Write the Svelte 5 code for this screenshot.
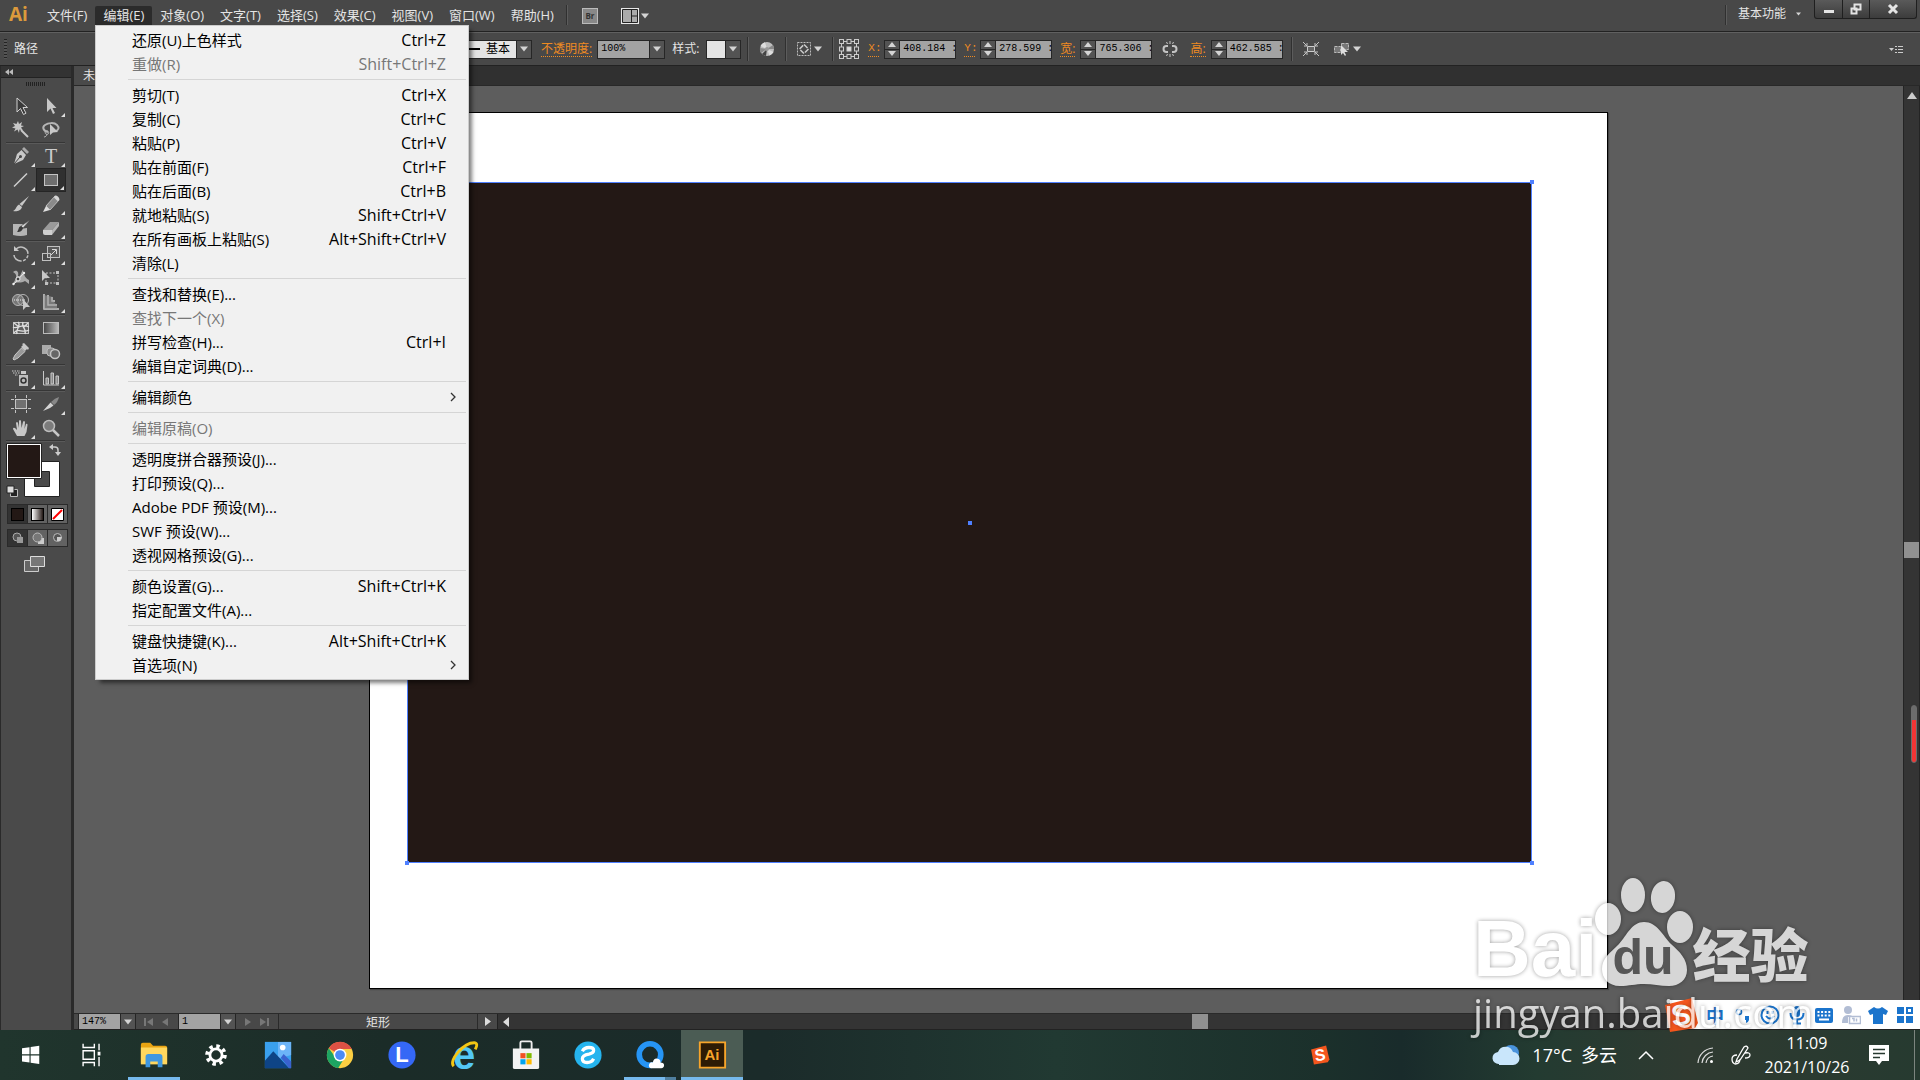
<script lang="ts">
    type Item = { label: string; keys?: string; off?: boolean; sub?: boolean };

    const menus = ["文件(F)", "编辑(E)", "对象(O)", "文字(T)", "选择(S)", "效果(C)", "视图(V)", "窗口(W)", "帮助(H)"];

    let openMenu = $state("编辑(E)");
    let activeTool = $state("rect");

    const editMenu: Item[][] = [
        [
            { label: "还原(U)上色样式", keys: "Ctrl+Z" },
            { label: "重做(R)", keys: "Shift+Ctrl+Z", off: true },
        ],
        [
            { label: "剪切(T)", keys: "Ctrl+X" },
            { label: "复制(C)", keys: "Ctrl+C" },
            { label: "粘贴(P)", keys: "Ctrl+V" },
            { label: "贴在前面(F)", keys: "Ctrl+F" },
            { label: "贴在后面(B)", keys: "Ctrl+B" },
            { label: "就地粘贴(S)", keys: "Shift+Ctrl+V" },
            { label: "在所有画板上粘贴(S)", keys: "Alt+Shift+Ctrl+V" },
            { label: "清除(L)" },
        ],
        [
            { label: "查找和替换(E)..." },
            { label: "查找下一个(X)", off: true },
            { label: "拼写检查(H)...", keys: "Ctrl+I" },
            { label: "编辑自定词典(D)..." },
        ],
        [{ label: "编辑颜色", sub: true }],
        [{ label: "编辑原稿(O)", off: true }],
        [
            { label: "透明度拼合器预设(J)..." },
            { label: "打印预设(Q)..." },
            { label: "Adobe PDF 预设(M)..." },
            { label: "SWF 预设(W)..." },
            { label: "透视网格预设(G)..." },
        ],
        [
            { label: "颜色设置(G)...", keys: "Shift+Ctrl+K" },
            { label: "指定配置文件(A)..." },
        ],
        [
            { label: "键盘快捷键(K)...", keys: "Alt+Shift+Ctrl+K" },
            { label: "首选项(N)", sub: true },
        ],
    ];

    // each group is closed by a divider, "+" marks a tool with a flyout
    const toolGroups = [
        ["select", "direct+", "wand", "lasso"],
        ["pen+", "type+", "line+", "rect+", "brush", "pencil+", "blob", "eraser+"],
        ["rotate+", "scale+", "width+", "transform", "shape+", "perspective+"],
        ["mesh", "gradient", "dropper+", "blend"],
        ["spray+", "graph+"],
        ["artboard", "slice+", "hand+", "zoom"],
    ];

    const icons: Record<string, string> = {
        select: '<path d="M6 2v14l3.5-3.5 3 6 2.5-1.300-3-5.700h4.500z" fill="#3a3a3a" stroke="#d0d0d0"/>',
        direct: '<path d="M6 2v14l3.500-3.500 2.500 5.500 2-1-2.500-5h4z" fill="#c8c8c8"/>',
        wand: '<path d="M7 1l1 3 3-2-1 3.500 3 .5-3 1.500 2 3-3.500-1L8 13 6.500 9.500 3 11.500l1.500-3L1 7.500l3-1.500-2-3 3.500 1z" fill="#c8c8c8"/><path d="M10 10l7 7" stroke="#c8c8c8" stroke-width="2"/>',
        lasso: '<path d="M7 12C2 11 1 7 4 5s9-3 12 0 1 5-1 6" fill="none" stroke="#b5b5b5" stroke-width="2"/><path d="M5 11c-2 2 0 4 2 3s0-4-2-3M6 14c0 2-2 3-3 3" fill="none" stroke="#b5b5b5"/><path d="M9 4v11l3-2.500 5-.5z" fill="#c8c8c8"/>',
        pen: '<path d="M13 1l5 5-2 2-5-5z" fill="#aaa"/><path d="M10.500 4l4.500 5-3 5-9 4 3-10z" fill="#c8c8c8"/><path d="M3 18l6-7" stroke="#444"/><circle cx="9.500" cy="10.500" r="1.500" fill="#444"/>',
        type: '',
        line: '<path d="M3 16.500L16 3.500" stroke="#d0d0d0" stroke-width="1.500"/>',
        rect: '<rect x="3.500" y="4.500" width="13" height="11" fill="#6f6f6f" stroke="#c4c4c4"/>',
        brush: '<path d="M18 2l-7 10-2.500-2z" fill="#c8c8c8"/><path d="M8 10.500l3 2.500c-1 4-6 5-9 4 3-1 3-5 6-6.500z" fill="#c8c8c8"/>',
        pencil: '<path d="M14 2l4 4-9 10-4-4z" fill="#8a8a8a" stroke="#bbb"/><path d="M14 1.500q4 0 4.500 4.500l-2 1-3.500-3.500z" fill="#d6d6d6"/><path d="M5 12l4 4-7 2z" fill="#ddd"/>',
        blob: '<path d="M2 6h10l-3 5 7-1v7q-6 2-14 0z" fill="#b5b5b5"/><path d="M19 2l-7 8-2-2z" fill="#d8d8d8" stroke="#444" stroke-width=".5"/><path d="M10 8l2 2c-1 4-4 4-6 4 2-2 1-5 4-6z" fill="#3a3a3a"/>',
        eraser: '<path d="M9 4h9l-7 8H2z" fill="#9a9a9a"/><path d="M2 12h9v5H4q-2 0-2-2z" fill="#d0d0d0"/><path d="M18 4v4l-7 9v-5z" fill="#b5b5b5"/>',
        rotate: '<path d="M5 5c5-4 12-1 12 5 0 4-3 7-7 7s-7-3-7-6" fill="none" stroke="#c0c0c0" stroke-width="1.500" stroke-dasharray="16 1.500 3 1.500 3 1.500"/><path d="M3 2v5h5z" fill="#c8c8c8"/>',
        scale: '<rect x="6.500" y="2.500" width="12" height="11" fill="#5a5a5a" stroke="#c0c0c0"/><rect x="1.500" y="9.500" width="8" height="7" fill="none" stroke="#c0c0c0"/><path d="M10 11l5-5M11 5.500h4.500V10" fill="none" stroke="#d8d8d8"/>',
        width: '<path d="M2 4c4-3 6 0 5 4 3 1 3-4 5-6 1 5 2 8 6 10v4l-4-3c-4 3-8 0-12 3l3-6c1-3-1-5-3-6z" fill="#aaa"/><path d="M2 17L13 5" stroke="#eee"/><circle cx="7" cy="11" r="2" fill="#444" stroke="#eee"/><circle cx="2.500" cy="16" r="1.200" fill="#eee"/><circle cx="13" cy="5" r="1.200" fill="#eee"/>',
        transform: '<rect x="5" y="5" width="12" height="10" fill="none" stroke="#c0c0c0" stroke-dasharray="2 1.500"/><path d="M15 3h3v3h-3zM15 14h3v3h-3zM4 14h3v3H4z" fill="#c0c0c0"/><path d="M1 2v11l3-3h5z" fill="#c8c8c8"/>',
        shape: '<circle cx="7" cy="8" r="5.500" fill="#777" stroke="#b5b5b5"/><circle cx="12" cy="8" r="5.500" fill="none" stroke="#b5b5b5"/><path d="M3 8h12" stroke="#eee" stroke-dasharray="1 1"/><path d="M12 7v11l3-3h4z" fill="#c8c8c8"/>',
        perspective: '<path d="M3 2v15h15M7 3v10h9M11 5v4h3" fill="none" stroke="#d0d0d0" stroke-width="1.500"/><path d="M3 3l9 2v4l4 4v4H3z" fill="#999" opacity=".6"/>',
        mesh: '<rect x="2.500" y="4.500" width="15" height="11" fill="#5f5f5f" stroke="#c4c4c4"/><path d="M2 9c4 3 8-4 16 0M3 15c3-6 9 1 15-3M7 4c4 4-3 7-1 12M12 4c-2 5 4 7 2 12M3 5l5 4M17 5l-5 5" fill="none" stroke="#ddd" stroke-width="1.300"/>',
        gradient: '<defs><linearGradient id="g"><stop stop-color="#444"/><stop offset="1" stop-color="#bbb"/></linearGradient></defs><rect x="2.500" y="4.500" width="15" height="11" fill="url(#g)" stroke="#bbb"/>',
        dropper: '<path d="M12 3l-1-1 2-1 5 5-1 2-1-1-2 2-4-4z" fill="#c8c8c8"/><path d="M10.500 6l3.500 3.500L7 16l-4 2-1-1 2-4z" fill="#999" stroke="#c8c8c8"/>',
        blend: '<rect x="1" y="3" width="9" height="9" fill="#aaa"/><rect x="6" y="6" width="8" height="8" rx="3" fill="#888" stroke="#bbb"/><circle cx="14" cy="12" r="4.500" fill="#666" stroke="#c4c4c4" stroke-width="1.500"/>',
        spray: '<rect x="8" y="7" width="9" height="11" fill="#bdbdbd"/><rect x="10" y="3" width="5" height="3" fill="#c8c8c8"/><circle cx="12.500" cy="12.500" r="2.500" fill="#bbb" stroke="#333" stroke-width="1.500"/><path d="M1 3h8M2 5h7M4 7h3" stroke="#ccc" stroke-dasharray="1.500 1"/>',
        graph: '<path d="M2.500 3v14H18" fill="none" stroke="#c8c8c8"/><path d="M5 10h2.500v6H5zM10 5h2.500v11H10zM15 8h2.500v8H15z" fill="#888" stroke="#c8c8c8"/>',
        artboard: '<rect x="4.500" y="5.500" width="11" height="9" fill="#707070" stroke="#c4c4c4"/><path d="M4.500 1v3M15.500 1v3M4.500 16v3M15.500 16v3M0 5.500h3M17 5.500h3M0 14.500h3M17 14.500h3" stroke="#c4c4c4"/>',
        slice: '<path d="M18 3q-1 5-5 8l-3-3q4-4 8-5z" fill="#888"/><path d="M9.500 8.500l3 3L9 14l-7 3z" fill="#d4d4d4"/>',
        hand: '<path d="M6 18l-4-7q0-2 2-1l2 2-1-7q1-2 2 0l1 5V3q1-2 2 0l.5 7L12 4q1-2 2 0l-.5 7 1.500-5q1.500-1 1.500 1l-1 7-2 4z" fill="#c8c8c8"/>',
        zoom: '<circle cx="8" cy="8" r="5.500" fill="#7c7c7c" stroke="#bdbdbd" stroke-width="1.500"/><path d="M12 12l6 6" stroke="#c8c8c8" stroke-width="2.500"/>',
    };

    const measures = [
        { id: "x", label: "X:", value: "408.184 :" },
        { id: "y", label: "Y:", value: "278.599 :" },
        { id: "w", label: "宽:", value: "765.306 :" },
        { id: "h", label: "高:", value: "462.585 :" },
    ];

    const apps = [
        { name: "start", svg: '<path d="M4 7l10-1.500V15H4zM15.500 5.200L27 3.500V15H15.500zM4 16.500h10V26L4 24.500zM15.500 16.500H27V28l-11.500-1.700z" fill="#fff"/>' },
        { name: "tasks", svg: '<path d="M6.500 4v4h12V4M6.500 28v-4h12v4M6.500 11.500h12v9h-12zM23.500 4v7M23.500 18v10" fill="none" stroke="#fff" stroke-width="1.500"/><path d="M22 12.500h3v4h-3z" fill="#fff"/>' },
        { name: "explorer", on: true, svg: '<path d="M2 5q0-2 2-2h8l3 3h13q2 0 2 2v17H2z" fill="#e9a412"/><path d="M2 8h28v18H2z" fill="#ffd75e"/><path d="M7 29V18q0-3 3-3h12q3 0 3 3v11h-5v-6h-8v6z" fill="#3f97e0"/>' },
        { name: "settings", svg: '<g fill="none" stroke="#fff"><circle cx="16" cy="16" r="6.500" stroke-width="3"/><circle cx="16" cy="16" r="9.500" stroke-width="4" stroke-dasharray="3.700 3.760"/></g>' },
        { name: "photos", svg: '<path d="M2 2h28v28H2z" fill="#3aa0ee"/><path d="M16 2h14v14L16 20z" fill="#6cb4f8"/><path d="M2 22l9-10 17 18H2z" fill="#0e4486"/><path d="M19 19l3-4 8 8v7h-2z" fill="#3a62cf"/><circle cx="21" cy="8" r="3" fill="#fff"/>' },
        { name: "chrome", svg: '<circle cx="16" cy="16" r="14" fill="#fbcf42"/><path d="M16 16L4 8.800A14 14 0 0 1 28.500 9.500H16z" fill="#dd5144"/><path d="M4 8.800A14 14 0 0 0 14 30l6.500-10.500-9-.5z" fill="#1da462"/><circle cx="16" cy="16" r="6.800" fill="#fff"/><circle cx="16" cy="16" r="5.200" fill="#4c8bf5"/>' },
        { name: "launcher", text: "L", svg: '<circle cx="16" cy="16" r="14.500" fill="#3568f6"/>' },
        { name: "ie", text: "e", svg: '<path d="M5 28C-1 22 16 2 28 3c3 1 1 5 0 7" fill="none" stroke="#f4c613" stroke-width="3"/>' },
        { name: "store", svg: '<path d="M10 10V3q0-1.500 1.500-1.500h9Q22 1.500 22 3v7" fill="none" stroke="#eee" stroke-width="2"/><path d="M2 9h28v20q0 2-2 2H4q-2 0-2-2z" fill="#f3f3f3"/><path d="M10 14h5.500v5.500H10z" fill="#f25022"/><path d="M16.500 14H22v5.500h-5.500z" fill="#7fba00"/><path d="M10 20.500h5.500V26H10z" fill="#00a4ef"/><path d="M16.500 20.500H22V26h-5.500z" fill="#ffb900"/>' },
        { name: "edge", svg: '<circle cx="16" cy="16" r="14.500" fill="#25b4ee"/><path d="M10 12q2-4 7-4 5 0 5 3 0 3-5 4-7 1-7 5 0 4 5 4 5 0 7-4" fill="none" stroke="#fff" stroke-width="3.500"/>' },
        { name: "qq", on: true, split: true, svg: '<circle cx="16" cy="15.500" r="11.500" fill="none" stroke="#2695f5" stroke-width="6"/><path d="M17 30q-3-1-2-4 1-3 4-2 1-5 5-4 4 1 3 4 4 0 4 3t-3 3z" fill="#fff"/>' },
        { name: "ai", on: true, focused: true, text: "Ai", svg: '<path d="M3 2.500h27v27H3z" fill="#2d1b05" stroke="#f7a52b" stroke-width="2"/>' },
    ];
</script>

{#snippet caret()}
    <svg class="caret" viewBox="0 0 8 6"><path d="M0 .5h8L4 5.500z" fill="#d4d4d4" /></svg>
{/snippet}

{#snippet sogou(size)}
    <svg width={size} height={size} viewBox="0 0 36 36">
        <path d="M2 8L29 1l6 25-3 5-25 4z" fill="#f4561d" />
        <text x="18" y="28" text-anchor="middle" class="sogou-s" transform="rotate(-8 18 18)">S</text>
    </svg>
{/snippet}

<div class="screen">
    <header class="menubar">
        <span class="brand">Ai</span>
        <nav>
            {#each menus as m}
                <button class:open={openMenu === m} onclick={() => (openMenu = openMenu === m ? "" : m)}>{m}</button>
            {/each}
        </nav>
        <span class="rule"></span>
        <button class="bridge" aria-label="Bridge">Br</button>
        <button class="arrange" aria-label="排列文档">
            <svg width="18" height="16" viewBox="0 0 18 16"><path d="M0 0h18v16H0z" fill="#e8e8e8" /><path d="M1.500 1.500h15v13h-15zM10.500 2v12M11 8h5" fill="#aaa" stroke="#222" /></svg>
            {@render caret()}
        </button>
        <span class="rule far"></span>
        <button class="workspace-name">基本功能 {@render caret()}</button>
        <div class="window-buttons">
            <button aria-label="最小化"><svg width="12" height="12" viewBox="0 0 12 12"><path d="M1 7h10v3H1z" fill="#e4e4e4" /></svg></button>
            <button aria-label="还原"><svg width="12" height="12" viewBox="0 0 12 12"><path d="M4.500 1.500h6v5h-6zM1.500 5.500h5v5h-5z" fill="none" stroke="#e4e4e4" stroke-width="2" /></svg></button>
            <button aria-label="关闭"><svg width="12" height="12" viewBox="0 0 12 12"><path d="M2 2l8 8M10 2l-8 8" stroke="#e4e4e4" stroke-width="3" /></svg></button>
        </div>
    </header>

    <div class="control">
        <span class="grip"></span>
        <span class="kind">路径</span>
        <div class="combo basic">
            <button class="stroke-line"><i></i>基本</button>
            <button class="drop" aria-label="画笔定义">{@render caret()}</button>
        </div>
        <label class="hot opacity-label" for="opacity">不透明度:</label>
        <div class="combo opacity">
            <input id="opacity" value="100%" />
            <button class="drop" aria-label="不透明度列表">{@render caret()}</button>
        </div>
        <span class="style-label">样式:</span>
        <div class="combo swatch">
            <button class="chip" aria-label="图形样式"></button>
            <button class="drop" aria-label="样式列表">{@render caret()}</button>
        </div>
        <span class="rule"></span>
        <button class="tool-icon" aria-label="重新着色">
            <svg width="16" height="16" viewBox="0 0 16 16"><circle cx="8" cy="8" r="7" fill="#bdbdbd" /><path d="M8 8L1.500 5A7 7 0 0 1 6 1.300zM8 8l6.500 3a7 7 0 0 1-4 3.500z" fill="#ddd" /><path d="M8 8l-6 4a7 7 0 0 1-1-5zM8 8l6-4a7 7 0 0 1 1 4z" fill="#888" /><path d="M8 8l-1 7a7 7 0 0 1-4-2z" fill="#444" /><circle cx="8" cy="8" r="2" fill="#999" /></svg>
        </button>
        <span class="rule"></span>
        <button class="tool-icon" aria-label="对齐">
            <svg width="14" height="14" viewBox="0 0 14 14"><path d="M.5.500h13v13H.5z" fill="none" stroke="#bbb" stroke-dasharray="2 1" /><path d="M7 2.500L11.500 7 7 11.500 2.500 7z" fill="none" stroke="#ccc" stroke-width="1.500" stroke-dasharray="5 1.400" /></svg>
            {@render caret()}
        </button>
        <span class="rule"></span>
        <svg class="reference" width="20" height="20" viewBox="0 0 20 20">
            <path d="M2.500 2.500h15v15h-15z" fill="none" stroke="#ccc" />
            {#each [0, 1, 2, 3, 4, 5, 6, 7, 8] as n}
                <rect x={0.5 + (n % 3) * 7.5} y={0.5 + Math.floor(n / 3) * 7.5} width="4" height="4" fill={n === 4 ? "#ddd" : "#484848"} stroke="#ccc" />
            {/each}
        </svg>
        {#each measures as m}
            {#if m.id === "h"}
                <button class="tool-icon link" aria-label="约束宽度和高度比例">
                    <svg width="16" height="16" viewBox="0 0 16 16"><path d="M6 5H4.500a3 3 0 0 0 0 6H6M10 5h1.500a3 3 0 0 1 0 6H10" fill="none" stroke="#c4c4c4" stroke-width="2" /><path d="M8 0v3M4.500 1l1 2M11.500 1l-1 2M8 16v-3M4.500 15l1-2M11.500 15l-1-2" stroke="#c4c4c4" /></svg>
                </button>
            {/if}
            <label class="hot" class:latin={m.id === "x" || m.id === "y"} for={m.id}>{m.label}</label>
            <div class="spin">
                <div class="steps">
                    <button aria-label="增加"><svg width="8" height="5" viewBox="0 0 8 5"><path d="M0 5h8L4 0z" fill="#d4d4d4" /></svg></button>
                    <button aria-label="减少"><svg width="8" height="5" viewBox="0 0 8 5"><path d="M0 0h8L4 5z" fill="#d4d4d4" /></svg></button>
                </div>
                <input id={m.id} value={m.value} />
            </div>
        {/each}
        <span class="rule"></span>
        <button class="tool-icon" aria-label="隔离选中的对象">
            <svg width="16" height="14" viewBox="0 0 16 14"><path d="M4.500 4.500h7v5h-7z" fill="#666" stroke="#ccc" /><path d="M0 0l4 4M4 1v3H1M16 0l-4 4M12 1v3h3M0 14l4-4M1 10h3v3M16 14l-4-4M15 10h-3v3" fill="none" stroke="#c4c4c4" /></svg>
        </button>
        <button class="tool-icon similar" aria-label="选择类似的对象">
            <svg width="17" height="14" viewBox="0 0 17 14"><path d="M1.500 4.500h6v6h-6zM8.500 1.500h7v6h-7z" fill="#777" stroke="#bbb" stroke-dasharray="3 1" /><path d="M8 3v10l2-2 2 3 1-1-1.500-3H15z" fill="#ddd" /></svg>
            {@render caret()}
        </button>
        <button class="tool-icon panel-menu" aria-label="面板菜单">
            <svg width="14" height="9" viewBox="0 0 14 9"><path d="M0 3h5L2.500 6z" fill="#ccc" /><path d="M6 1.500h8M6 4.500h8M6 7.500h8" stroke="#ccc" stroke-dasharray="2 1 5" /></svg>
        </button>
    </div>

    <main>
        <aside>
            <div class="aside-head">
                <svg width="8" height="6" viewBox="0 0 8 6"><path d="M4 0v6L0 3zM8 0v6L4 3z" fill="#bbb" /></svg>
            </div>
            <div class="aside-grip"></div>
            {#each toolGroups as group}
                <div class="tools">
                    {#each group as t}
                        {@const name = t.replace("+", "")}
                        <button class:active={activeTool === name} class:flyout={t.endsWith("+")} aria-label={name} onclick={() => (activeTool = name)}>
                            {#if name === "type"}
                                <span class="type-t">T</span>
                            {:else}
                                <svg width="20" height="20" viewBox="0 0 20 20">{@html icons[name]}</svg>
                            {/if}
                        </button>
                    {/each}
                </div>
            {/each}
            <svg class="fill-stroke" width="56" height="56" viewBox="0 0 56 56">
                <path d="M18.500 18.500h35v35h-35z" fill="#fff" stroke="#222" />
                <path d="M28.500 28.500h15v15h-15z" fill="#4a4a4a" stroke="#222" />
                <path d="M.5.500h35v35H.5z" fill="#fff" stroke="#222" />
                <path d="M2 2h32v32H2z" fill="#231815" />
                <path d="M45 4h4q3 0 3 3v4" fill="none" stroke="#ccc" stroke-width="1.500" />
                <path d="M43 4l4-3v6zM49 9h6l-3 4z" fill="#ccc" />
                <path d="M4.500 46.500h7v7h-7z" fill="#222" stroke="#bbb" />
                <path d="M1 43h7v7H1z" fill="#ddd" stroke="#222" />
            </svg>
            <div class="modes colors">
                <button class="on" aria-label="颜色"><i class="solid"></i></button>
                <button aria-label="渐变"><i class="fade"></i></button>
                <button aria-label="无"><svg width="13" height="13" viewBox="0 0 13 13"><path d="M.5.500h12v12H.5z" fill="#fff" stroke="#000" /><path d="M2 11l9-9" stroke="#f00" stroke-width="2" /></svg></button>
            </div>
            <div class="modes">
                <button class="on" aria-label="正常绘图"><svg width="12" height="12" viewBox="0 0 12 12"><circle cx="5" cy="5" r="4" fill="#555" stroke="#aaa" /><path d="M5 5h6v6H5z" fill="#999" /></svg></button>
                <button aria-label="背面绘图"><svg width="12" height="12" viewBox="0 0 12 12"><path d="M6 6h6v6H6z" fill="#ccc" /><circle cx="5.500" cy="5.500" r="4.500" fill="#777" stroke="#bbb" /></svg></button>
                <button aria-label="内部绘图"><svg width="12" height="12" viewBox="0 0 12 12"><circle cx="5.500" cy="5.500" r="4" fill="#555" stroke="#bbb" /><path d="M5 5h5l-2 4H5z" fill="#ccc" /></svg></button>
            </div>
            <button class="screen-mode" aria-label="更改屏幕模式">
                <svg width="22" height="18" viewBox="0 0 22 18"><path d="M.5 5.500h14v11H.5z" fill="#666" stroke="#ccc" /><path d="M6.500 1.500h14v10h-14z" fill="#777" stroke="#ddd" /></svg>
            </button>
        </aside>

        <section class="document">
            <div class="tabs"><button>未标题-1*</button></div>
            <div class="view">
                <div class="canvas">
                    <div class="artboard">
                        <div class="shape">
                            <i class="tl"></i><i class="tr"></i><i class="bl"></i><i class="br"></i><i class="mid"></i>
                        </div>
                    </div>
                </div>
                <div class="vscroll">
                    <svg width="10" height="7" viewBox="0 0 10 7"><path d="M5 0l5 7H0z" fill="#ccc" /></svg>
                    <div class="thumb"></div>
                    <div class="meter"></div>
                </div>
            </div>
            <div class="status">
                <div class="combo small">
                    <input aria-label="缩放" value="147%" />
                    <button class="drop" aria-label="缩放列表">{@render caret()}</button>
                </div>
                <div class="steps-nav">
                    <svg width="9" height="8" viewBox="0 0 9 8"><path d="M0 0h2v8H0zM9 0v8L3 4z" fill="#777" /></svg>
                    <svg width="6" height="8" viewBox="0 0 6 8"><path d="M6 0v8L0 4z" fill="#777" /></svg>
                </div>
                <div class="combo small">
                    <input aria-label="画板" value="1" />
                    <button class="drop" aria-label="画板列表">{@render caret()}</button>
                </div>
                <div class="steps-nav last">
                    <svg width="6" height="8" viewBox="0 0 6 8"><path d="M0 0v8l6-4z" fill="#777" /></svg>
                    <svg width="9" height="8" viewBox="0 0 9 8"><path d="M7 0h2v8H7zM0 0v8l6-4z" fill="#777" /></svg>
                </div>
                <span class="current">矩形</span>
                <button class="more" aria-label="状态菜单"><svg width="6" height="9" viewBox="0 0 6 9"><path d="M0 0v9l6-4.500z" fill="#ddd" /></svg></button>
                <div class="hscroll">
                    <svg width="6" height="10" viewBox="0 0 6 10"><path d="M6 0v10L0 5z" fill="#ddd" /></svg>
                    <div class="thumb"></div>
                </div>
            </div>
        </section>

        <div class="ime">
            <span class="ime-logo">{@render sogou(36)}</span>
            <span class="zh">中</span>
            <svg viewBox="0 0 20 20"><circle cx="6" cy="7" r="2.500" fill="none" stroke="#1b74cc" stroke-width="1.500" /><path d="M12 11h4v4q-1 3-3 3v-3h-1z" fill="#1b74cc" /></svg>
            <svg viewBox="0 0 20 20"><g fill="none" stroke="#1b74cc" stroke-width="2"><circle cx="10" cy="10" r="8.500" /><path d="M6 11q4 5 8 0M7.500 6v3M12.500 6v3" /></g></svg>
            <svg viewBox="0 0 20 20"><rect x="7" y="1" width="6" height="11" rx="3" fill="#1b74cc" /><path d="M3.500 8q0 6.500 6.500 6.500T16.500 8M10 14v4M6 18.500h8" fill="none" stroke="#1b74cc" stroke-width="2" /></svg>
            <svg viewBox="0 0 20 20"><rect x="1" y="3" width="18" height="15" rx="2" fill="#1b74cc" /><path d="M3.500 7h13M3.500 10.500h13" stroke="#fff" stroke-width="2" stroke-dasharray="2 1.600" /><path d="M5 14.500h10" stroke="#fff" stroke-width="2" /></svg>
            <svg viewBox="0 0 20 20"><g fill="#b2bdd4"><circle cx="7" cy="5" r="4" /><path d="M1 18q0-8 6-8 4 0 5 2H7v6z" /></g><path d="M8.500 11.500h11v7h-11zM11 13.500h2v3M15.500 13.500v3" fill="none" stroke="#b2bdd4" stroke-width="1.500" /></svg>
            <svg viewBox="0 0 20 20"><path d="M6 2q4 3 8 0l6 4-2 4-3-1v10H5V9l-3 1-2-4z" fill="#1b74cc" /></svg>
            <svg viewBox="0 0 20 20"><path d="M2 2h7v7H2zM2 11h7v7H2zM11 11h7v7h-7z" fill="#1b74cc" /><path d="M12 3h5v5h-5z" fill="none" stroke="#1b74cc" stroke-width="2" /></svg>
        </div>
    </main>

    <footer>
        {#each apps as app}
            <button class="app {app.name}" class:on={app.on} class:focused={app.focused} class:split={app.split} aria-label={app.name}>
                <svg width="30" height="30" viewBox="0 0 32 32">{@html app.svg}</svg>
                {#if app.text}<span>{app.text}</span>{/if}
            </button>
        {/each}
        <div class="tray-sogou">{@render sogou(20)}</div>
        <button class="weather">
            <svg width="28" height="22" viewBox="0 0 28 22"><circle cx="19" cy="9" r="8" fill="#4a93dc" /><path d="M7 20a6 6 0 0 1-1-12 8 8 0 0 1 15 0 6.500 6.500 0 0 1 0 13H7z" fill="#c9e6fb" /></svg>
            17°C&ensp;多云
        </button>
        <button class="expand" aria-label="显示隐藏的图标"><svg width="16" height="10" viewBox="0 0 16 10"><path d="M1 9l7-7 7 7" fill="none" stroke="#fff" stroke-width="1.500" /></svg></button>
        <svg class="wifi" width="18" height="18" viewBox="0 0 18 18"><g fill="none" stroke="#ddd" stroke-width="1.200"><path d="M1 17A16 16 0 0 1 16 2M5 17A12 12 0 0 1 16 6M9 17a8 8 0 0 1 7-7" /></g><circle cx="14.500" cy="15.500" r="1.500" fill="#fff" /></svg>
        <svg class="ink" width="20" height="20" viewBox="0 0 20 20"><path d="M6 14l7-12q3-2 4 1l-8 12-4 2zM6 10q-5 0-5 4t3 5q5 0 5-5M14 8q5-1 5 2t-5 3" fill="none" stroke="#fff" stroke-width="1.300" /></svg>
        <div class="clock"><span>11:09</span><span>2021/10/26</span></div>
        <button class="notes" aria-label="通知"><svg width="20" height="20" viewBox="0 0 20 20"><path d="M0 0h20v16h-7l-3 4-3-4H0z" fill="#fff" /><path d="M4 4.500h12M4 8.500h12M4 12.500h7" stroke="#26382f" stroke-width="1.300" /></svg></button>
    </footer>

    {#if openMenu === "编辑(E)"}
        <div class="dropdown" role="menu">
            {#each editMenu as group}
                <div class="group">
                    {#each group as item}
                        <button role="menuitem" disabled={item.off}>
                            <span>{item.label}</span>
                            {#if item.keys}<kbd>{item.keys}</kbd>{/if}
                            {#if item.sub}<svg width="6" height="10" viewBox="0 0 6 10"><path d="M1 1l4 4-4 4" fill="none" stroke="#333" stroke-width="1.300" /></svg>{/if}
                        </button>
                    {/each}
                </div>
            {/each}
        </div>
    {/if}

    <div class="watermark">
        <div class="mark">
            <b>Bai</b>
            <div class="paw">
                <svg width="96" height="110" viewBox="0 0 96 110">
                    <g fill="#fff">
                        <ellipse cx="15" cy="41" rx="13" ry="16" />
                        <ellipse cx="40" cy="17" rx="12" ry="17" />
                        <ellipse cx="70" cy="19" rx="12" ry="16" transform="rotate(8 70 19)" />
                        <ellipse cx="87" cy="49" rx="13" ry="16" />
                        <path d="M51 44c13 0 19 14 27 22 9 8 16 15 16 26 0 10-8 16-18 16-9 0-16-2-25-2s-15 2-24 2c-12 0-18-8-18-17 0-11 8-16 17-25 8-9 13-22 25-22z" />
                    </g>
                </svg>
                <span>du</span>
            </div>
            <b class="zh-mark">经验</b>
        </div>
        <div class="site">jingyan.baidu.com</div>
    </div>
</div>

<style>
    :global(body) {
        margin: 0;
        background: #5d5d5d;
    }

    .screen {
        position: relative;
        display: flex;
        flex-direction: column;
        min-height: 100vh;
        overflow: hidden;
        color: #e4e4e4;
        font: 12px/16px "Open Sans", "Noto Sans CJK SC", sans-serif;
    }
    .screen * {
        box-sizing: border-box;
    }
    button,
    input {
        padding: 0;
        border: 0;
        background: none;
        color: inherit;
        font: inherit;
        border-radius: 0;
        outline: 0;
    }
    svg {
        display: block;
        flex: none;
    }
    .caret {
        width: 8px;
        height: 6px;
    }
    .rule {
        flex: none;
        width: 2px;
        height: 24px;
        background: #303030;
        border-right: 1px solid #5c5c5c;
    }

    .menubar {
        display: flex;
        align-items: flex-start;
        height: 32px;
        background: #484848;
        border-bottom: 1px solid #222;
    }
    .menubar .rule {
        margin-top: 5px;
        height: 20px;
    }
    .brand {
        width: 39px;
        padding-left: 9px;
        color: #dc9a3c;
        font: bold 19px/28px "Open Sans", sans-serif;
    }
    nav {
        display: flex;
        margin-right: 4px;
    }
    nav button {
        height: 19px;
        margin-top: 6px;
        padding: 0 8px;
        border-radius: 2px 2px 0 0;
        font-size: 13px;
        line-height: 19px;
    }
    nav button.open {
        background: #2b2b2b;
    }
    .bridge {
        width: 16px;
        height: 16px;
        margin: 8px 23px 0 14px;
        border: 1px solid #bbb;
        background: #888;
        color: #333;
        font: bold 8px/14px "Open Sans", sans-serif;
    }
    .arrange {
        display: flex;
        align-items: center;
        gap: 2px;
        margin-top: 8px;
    }
    .menubar .rule.far {
        margin-left: auto;
    }
    .workspace-name {
        display: flex;
        align-items: center;
        gap: 10px;
        height: 28px;
        margin: 0 13px 0 11px;
    }
    .workspace-name .caret {
        width: 5px;
        height: 4px;
    }
    .window-buttons {
        display: flex;
        margin-right: 3px;
        border: 1px solid #1f1f1f;
        border-top: 0;
        border-radius: 0 0 3px 3px;
        background: linear-gradient(#5a5a5a, #3c3c3c);
    }
    .window-buttons button {
        display: flex;
        align-items: center;
        justify-content: center;
        width: 27px;
        height: 18px;
    }
    .window-buttons button + button {
        border-left: 1px solid #1f1f1f;
    }
    .window-buttons button:last-child {
        width: 47px;
    }

    .control {
        display: flex;
        align-items: center;
        height: 34px;
        background: #484848;
        border-top: 1px solid #606060;
        border-bottom: 1px solid #222;
    }
    .grip {
        width: 3px;
        height: 20px;
        margin: 0 7px 0 4px;
        background: repeating-linear-gradient(#222 0 1px, #555 1px 3px);
    }
    .kind {
        width: 425px;
    }
    .combo,
    .spin {
        display: flex;
        height: 19px;
        border: 1px solid #262626;
        background: #a3a3a3;
        color: #000;
        font-size: 12px;
    }
    .drop {
        display: flex;
        align-items: center;
        justify-content: center;
        width: 15px;
        border-left: 1px solid #262626;
        background: #535353;
    }
    .combo input,
    .spin input {
        font-family: "Liberation Mono", monospace;
        font-size: 10px;
    }
    .stroke-line {
        display: flex;
        align-items: center;
        gap: 6px;
        width: 76px;
        background: #e4e4e4;
    }
    .stroke-line i {
        width: 40px;
        height: 2px;
        background: #000;
    }
    .hot {
        color: #ef8b22;
        border-bottom: 1px dotted #ef8b22;
        line-height: 15px;
    }
    .hot.latin {
        width: 11px;
        font-family: "Liberation Mono", monospace;
        font-size: 11px;
        white-space: nowrap;
    }
    .opacity-label {
        margin: 0 5px 0 9px;
    }
    .opacity input {
        width: 51px;
        padding-left: 3px;
    }
    .style-label {
        margin: 0 7px;
    }
    .chip {
        width: 18px;
        background: #e4e4e4;
    }
    .swatch {
        margin-right: 6px;
    }
    .tool-icon {
        display: flex;
        align-items: center;
        gap: 3px;
        margin: 0 10px;
    }
    .reference {
        margin: 0 9px 0 5px;
    }
    .spin {
        width: 72px;
        margin: 0 8px 0 5px;
    }
    .steps {
        display: flex;
        flex-direction: column;
        width: 15px;
        background: #535353;
        border-right: 1px solid #262626;
    }
    .steps button {
        display: flex;
        align-items: center;
        justify-content: center;
        flex: 1;
    }
    .steps button + button {
        border-top: 1px solid #262626;
    }
    .spin input {
        width: 55px;
        padding-left: 3px;
    }
    .link {
        margin: 0 12px 0 2px;
    }
    .similar {
        margin-left: 4px;
    }
    .panel-menu {
        margin: 0 17px 0 auto;
    }

    main {
        position: relative;
        display: flex;
        flex: 1;
    }
    aside {
        flex: none;
        width: 74px;
        padding: 0 6px 0 5px;
        background: #4a4a4a;
        border-left: 1px solid #2a2a2a;
        border-right: 3px solid #2a2a2a;
    }
    .aside-head {
        display: flex;
        align-items: center;
        height: 12px;
        margin: 0 -6px 0 -5px;
        padding-left: 4px;
        background: #333;
        border-bottom: 1px solid #222;
    }
    .aside-grip {
        width: 20px;
        height: 4px;
        margin: 4px 0 8px 20px;
        background: repeating-linear-gradient(90deg, #222 0 1px, #4a4a4a 1px 2px);
    }
    .tools {
        display: grid;
        grid-template-columns: 30px 30px;
        grid-auto-rows: 24px;
        border-bottom: 1px solid #363636;
        box-shadow: 0 1px #5a5a5a;
        margin-bottom: 1px;
    }
    .tools button {
        display: flex;
        align-items: center;
        justify-content: center;
        position: relative;
    }
    .tools button.active {
        background: #303030;
        border: 1px solid #252525;
    }
    .tools button.flyout::after {
        content: "";
        position: absolute;
        right: 1px;
        bottom: 1px;
        border: 2px solid;
        border-color: transparent #ddd #ddd transparent;
    }
    .type-t {
        font: 20px/20px "Liberation Serif", serif;
        color: #ccc;
    }
    .fill-stroke {
        margin: 2px 0 5px;
    }
    .modes {
        display: flex;
        width: 61px;
        height: 18px;
        margin: 0 0 6px 1px;
        border: 1px solid #2a2a2a;
        background: #626262;
    }
    .modes.colors {
        height: 20px;
        margin-bottom: 5px;
    }
    .modes button {
        display: flex;
        align-items: center;
        justify-content: center;
        flex: 1;
    }
    .modes button + button {
        border-left: 1px solid #2a2a2a;
    }
    .modes .on {
        background: #333;
    }
    .modes i {
        width: 13px;
        height: 13px;
        border: 1px solid #000;
    }
    .solid {
        background: #231815;
    }
    .fade {
        background: linear-gradient(90deg, #fff, #231815);
    }
    .screen-mode {
        margin: 2px 0 0 18px;
    }

    .document {
        display: flex;
        flex-direction: column;
        flex: 1;
        min-width: 0;
    }
    .tabs {
        height: 20px;
        background: #303030;
        border-bottom: 1px solid #282828;
    }
    .tabs button {
        height: 19px;
        padding: 0 9px;
        background: #4a4a4a;
    }
    .view {
        display: flex;
        flex: 1;
    }
    .canvas {
        position: relative;
        flex: 1;
        background: #5d5d5d;
    }
    .artboard {
        position: absolute;
        left: 295px;
        top: 26px;
        width: 1239px;
        height: 877px;
        border: 1px solid #000;
        background: #fff;
        box-shadow: 1px 1px 1px #444;
    }
    .shape {
        position: absolute;
        left: 37px;
        top: 69px;
        width: 1125px;
        height: 681px;
        border: 1px solid #4f80ff;
        background: #231815;
    }
    .shape i {
        position: absolute;
        width: 4px;
        height: 4px;
        background: #4f80ff;
    }
    .tl { left: -3px; top: -3px; }
    .tr { right: -3px; top: -3px; }
    .bl { left: -3px; bottom: -3px; }
    .br { right: -3px; bottom: -3px; }
    .mid { left: calc(50% - 2px); top: calc(50% - 2px); }

    .vscroll {
        position: relative;
        width: 17px;
        padding: 6px 0 0 3px;
        background: #343434;
        border-left: 1px solid #242424;
        border-right: 1px solid #242424;
    }
    .thumb {
        position: absolute;
        background: #909090;
    }
    .vscroll .thumb {
        left: 0;
        top: calc(50% - 8px);
        width: 15px;
        height: 16px;
    }
    .meter {
        position: absolute;
        right: 2px;
        bottom: 250px;
        width: 6px;
        height: 58px;
        border: 1px solid #6c6c6c;
        border-radius: 3px;
        background: linear-gradient(#6c6c6c 14px, #f23535 14px);
    }
    .status {
        display: flex;
        height: 17px;
        padding-left: 4px;
        background: #484848;
        border-top: 1px solid #2a2a2a;
        border-bottom: 1px solid #222;
    }
    .combo.small {
        height: 15px;
        border-bottom: 0;
        border-top: 0;
    }
    .combo.small input {
        width: 41px;
        padding-left: 3px;
    }
    .steps-nav {
        display: flex;
        align-items: center;
        gap: 9px;
        padding: 0 10px 0 8px;
    }
    .steps-nav.last {
        padding: 0 9px;
        border-right: 1px solid #2a2a2a;
    }
    .current {
        width: 199px;
        text-align: center;
        line-height: 18px;
        border-right: 1px solid #2a2a2a;
    }
    .more {
        width: 19px;
        padding-left: 7px;
    }
    .hscroll {
        position: relative;
        display: flex;
        align-items: center;
        flex: 1;
        padding-left: 5px;
        background: #343434;
        border-left: 1px solid #222;
    }
    .hscroll .thumb {
        left: calc(50% - 17px);
        width: 16px;
        height: 15px;
    }

    .ime {
        position: absolute;
        right: 0;
        bottom: 1px;
        display: flex;
        align-items: center;
        gap: 7px;
        height: 29px;
        padding: 0 5px 0 0;
        background: #fff;
    }
    .ime > svg {
        width: 20px;
        height: 20px;
    }
    .ime-logo {
        margin-left: -7px;
    }
    .zh {
        width: 20px;
        color: #1b74cc;
        font: bold 18px/24px "Noto Sans CJK SC", sans-serif;
    }
    .sogou-s {
        fill: #fff;
        font: bold 29px "Liberation Sans", sans-serif;
    }

    footer {
        display: flex;
        align-items: center;
        height: 50px;
        background: linear-gradient(90deg, #20352d, #1b2c28 20%, #1b2b2a 40%, #213932 55%, #1b302b 69%, #192b2b 73%, #233b31 80%, #2f3a31 88%, #263a30);
        color: #fff;
        font: 18px/24px "Open Sans", "Noto Sans CJK SC", sans-serif;
    }
    .app {
        position: relative;
        display: flex;
        align-items: center;
        justify-content: center;
        width: 62px;
        height: 50px;
    }
    .app.start {
        width: 61px;
    }
    .app.start svg {
        width: 24px;
    }
    .app.on::after {
        content: "";
        position: absolute;
        left: 5px;
        right: 5px;
        bottom: 0;
        height: 3px;
        background: #76b9ed;
    }
    .app.split::after {
        background: linear-gradient(90deg, #76b9ed 41px, #507f9f 41px);
    }
    .app.focused {
        background: #4b5c54;
    }
    .app.focused::after {
        left: 0;
        right: 0;
    }
    .app span {
        position: absolute;
        font: bold 22px/30px "Liberation Sans", sans-serif;
    }
    .app.ai span {
        color: #f7a52b;
        font-size: 15px;
    }
    .app.ie span {
        color: #53c8f4;
        font-size: 40px;
        line-height: 24px;
        z-index: -1;
    }
    .app.ie {
        z-index: 0;
    }
    .tray-sogou {
        margin-left: auto;
    }
    .weather {
        display: flex;
        align-items: center;
        gap: 12px;
        margin-left: 162px;
    }
    .expand {
        margin: 0 43px 0 21px;
    }
    .ink {
        margin-left: 16px;
    }
    .clock {
        display: flex;
        flex-direction: column;
        align-items: center;
        width: 84px;
        margin: 0 20px 0 14px;
        font-size: 16px;
    }
    .notes {
        height: 50px;
        padding-right: 25px;
        margin-right: 5px;
        border-right: 1px solid #7b857f;
    }

    .dropdown {
        position: absolute;
        left: 95px;
        top: 25px;
        width: 374px;
        padding: 3px 2px 1px;
        border: 1px solid #ccc;
        background: #f1f1f1;
        box-shadow: 4px 4px 4px -1px rgba(0, 0, 0, 0.5);
        color: #000;
        font-size: 15px;
    }
    .group + .group::before {
        content: "";
        display: block;
        height: 1px;
        margin: 2px 0 4px 30px;
        background: #d5d5d5;
    }
    .dropdown button {
        display: flex;
        align-items: center;
        width: 100%;
        height: 24px;
        padding: 0 20px 2px 34px;
        text-align: left;
        white-space: nowrap;
    }
    .dropdown button:disabled {
        color: #777;
    }
    .dropdown kbd {
        margin-left: auto;
        font: 16px/22px "Open Sans", sans-serif;
    }
    .dropdown button svg {
        margin: 0 -10px 0 auto;
    }

    .watermark {
        position: absolute;
        right: 107px;
        bottom: 42px;
        width: 340px;
        color: #fff;
        opacity: 0.75;
        filter: drop-shadow(0 0 2px rgba(0, 0, 0, 0.5));
        pointer-events: none;
    }
    .mark {
        display: flex;
        align-items: flex-end;
        height: 110px;
    }
    .mark b {
        font: bold 80px/78px "Liberation Sans", sans-serif;
    }
    .mark .zh-mark {
        font: 900 58px/72px "Noto Sans CJK SC", sans-serif;
    }
    .paw {
        position: relative;
        width: 100px;
        margin-left: -5px;
    }
    .paw svg {
        overflow: visible;
    }
    .paw span {
        position: absolute;
        left: 20px;
        bottom: 6px;
        color: #555;
        font: bold 50px/50px "Liberation Sans", sans-serif;
    }
    .site {
        font: 40px/50px "Open Sans", sans-serif;
        white-space: nowrap;
    }
</style>
